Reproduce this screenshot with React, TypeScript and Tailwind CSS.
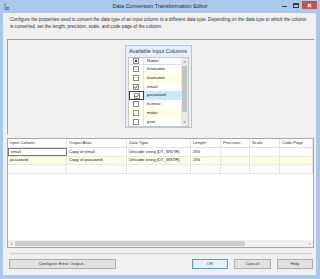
import React from "react";

const listRows = [
  { name: "firstname", checked: false },
  { name: "lastname", checked: false },
  { name: "email", checked: true },
  { name: "password", checked: true, selected: true },
  { name: "license", checked: false },
  { name: "make", checked: false },
  { name: "year", checked: false },
];

const gridCols = [
  { label: "Input Column", w: "w-[59px]" },
  { label: "Output Alias", w: "w-[60px]" },
  { label: "Data Type", w: "w-[64px]" },
  { label: "Length", w: "w-[30px]" },
  { label: "Precision", w: "w-[29px]" },
  { label: "Scale", w: "w-[30px]" },
  { label: "Code Page", w: "w-[33px]" },
];

const gridRows = [
  ["email", "Copy of email", "Unicode string [DT_WSTR]", "255", "", "", ""],
  ["password", "Copy of password", "Unicode string [DT_WSTR]", "255", "", "", ""],
  ["", "", "", "", "", "", ""],
];

function CheckBox({ checked, mixed }: { checked?: boolean; mixed?: boolean }) {
  return (
    <span className="flex h-[6px] w-[6px] items-center justify-center border border-[#8a8a8a] bg-white">
      {mixed && <span className="h-[2px] w-[2px] bg-[#2a2a2a]" />}
      {checked && (
        <svg width="4" height="4" viewBox="0 0 4 4">
          <path d="M0.4 2.1 L1.5 3.3 L3.7 0.6" stroke="#1a1a1a" strokeWidth="0.8" fill="none" />
        </svg>
      )}
    </span>
  );
}

function TitleBar() {
  return (
    <div className="grid h-[13px] grid-cols-[1fr_auto_1fr] items-center">
      <div className="pl-[4px]">
        <svg width="6" height="7" viewBox="0 0 6 7">
          <path d="M1 0.5 V6.5 H5.5" stroke="#5a6b7c" strokeWidth="0.8" fill="none" />
          <rect x="2" y="4" width="3" height="1.6" fill="#3b82c9" />
        </svg>
      </div>
      <div className="text-[5.5px] leading-none text-[#2b2b2b]">Data Conversion Transformation Editor</div>
      <div className="flex h-full items-start justify-end pr-[3px]">
        <div className="mt-[6px] h-[1px] w-[5px] bg-[#3a3a3a]" />
        <div className="ml-[6px] mt-[3px] h-[5px] w-[6px] border border-[#3a3a3a] border-t-2" />
        <div className="ml-[3px] mt-[1px] flex h-[8px] w-[15px] items-center justify-center bg-[#c75050]">
          <svg width="5" height="5" viewBox="0 0 5 5">
            <path d="M0.8 0.8 L4.2 4.2 M4.2 0.8 L0.8 4.2" stroke="#ffffff" strokeWidth="1.1" />
          </svg>
        </div>
      </div>
    </div>
  );
}

function AvailableColumns() {
  return (
    <div className="ml-[117px] mt-[5px] flex h-[83px] w-[67px] flex-col border border-[#b7c6d8] bg-[#e6eef8]">
      <div className="h-[11px] whitespace-nowrap pl-[3px] pt-[3px] text-[5.4px] leading-none text-[#1e3a5f]">
        Available Input Columns
      </div>
      <div className="mx-[2px] flex h-[70px] overflow-hidden border border-[#c8c8c8] bg-white">
        <div className="flex w-[54px] flex-col">
          <div className="flex h-[8.5px] items-center border-b border-[#dcdcdc]">
            <div className="flex h-full w-[15px] items-center justify-center border-r border-[#e2e2e2]">
              <CheckBox mixed />
            </div>
            <span className="pl-[3px] text-[4.4px] leading-none text-[#222]">Name</span>
          </div>
          {listRows.map((row, i) => (
            <div
              key={row.name}
              className={
                "flex h-[8.75px] shrink-0 items-center " +
                (i % 2 === 1 && !row.selected ? "bg-[#ffffe1]" : "bg-white")
              }
            >
              <div
                className={
                  "flex h-full w-[15px] items-center justify-center " +
                  (row.selected ? "border border-[#3c3c3c]" : "border-r border-[#e2e2e2]")
                }
              >
                <CheckBox checked={row.checked} />
              </div>
              <span
                className={
                  "flex h-full flex-1 items-center pl-[3px] text-[4.4px] leading-none text-[#222] " +
                  (row.selected ? "bg-[#cce8ff]" : "")
                }
              >
                {row.name}
              </span>
            </div>
          ))}
        </div>
        <div className="flex w-[7px] flex-col bg-[#e8e8e8]">
          <div className="flex h-[8px] items-center justify-center text-[4px] leading-none text-[#606060]">˄</div>
          <div className="mx-[1px] h-[46px] bg-[#c2c2c2]" />
          <div className="flex-1" />
          <div className="flex h-[8px] items-center justify-center text-[4px] leading-none text-[#606060]">˅</div>
        </div>
      </div>
    </div>
  );
}

function ColumnGrid() {
  return (
    <div className="ml-[4px] mr-[2px] mt-[4px] flex h-[110px] flex-col border border-[#a8a8a8] bg-white">
      <div className="flex h-[9px] shrink-0 border-b border-[#e0e0e0]">
        {gridCols.map((c) => (
          <div
            key={c.label}
            className={c.w + " flex items-center whitespace-nowrap border-r border-[#e4e4e4] pl-[2px] text-[4.2px] leading-none text-[#333]"}
          >
            {c.label}
          </div>
        ))}
      </div>
      {gridRows.map((row, r) => (
        <div
          key={r}
          className={
            "flex h-[8.7px] shrink-0 border-b border-[#e4e4e4] " + (r === 1 ? "bg-[#ffffe1]" : "bg-white")
          }
        >
          {row.map((cell, c) => (
            <div
              key={c}
              className={
                gridCols[c].w +
                " flex items-center overflow-hidden whitespace-nowrap pl-[2px] text-[4.2px] leading-none text-[#222] " +
                (r === 0 && c === 0 ? "border border-[#7a7a7a] bg-white" : "border-r border-[#e4e4e4]")
              }
            >
              {cell}
            </div>
          ))}
        </div>
      ))}
      <div className="flex-1" />
      <div className="flex h-[7px] shrink-0 items-center bg-[#f0f0f0]">
        <div className="flex h-full w-[7px] items-center justify-center text-[5px] leading-none text-[#555]">‹</div>
        <div className="h-[5px] w-[230px] bg-[#cdcdcd]" />
        <div className="flex-1" />
        <div className="flex h-full w-[7px] items-center justify-center text-[5px] leading-none text-[#555]">›</div>
      </div>
    </div>
  );
}

function Button({ label, w, primary }: { label: string; w: string; primary?: boolean }) {
  return (
    <div
      className={
        w +
        " flex h-[10px] items-center justify-center border text-[4.4px] leading-none text-[#333] " +
        (primary ? "border-[#5b9bd5] bg-[#e5f1fb]" : "border-[#adadad] bg-[#e1e1e1]")
      }
    >
      {label}
    </div>
  );
}

export default function App() {
  return (
    <div className="flex h-[279px] w-[320px] flex-col overflow-hidden bg-[#aac8ec] font-['Liberation_Sans',Arial,sans-serif]">
      <TitleBar />
      <div className="mb-[4px] ml-[3px] mr-[4px] flex flex-1 flex-col bg-[#f0f0f0]">
        <div className="h-[26px] whitespace-nowrap pl-[7px] pt-[4px] text-[4.6px] leading-[6.6px] text-[#333]">
          Configure the properties used to convert the data type of an input column to a different data type. Depending on the data type to which the column
          <br />
          is converted, set the length, precision, scale, and code page of the column.
        </div>
        <div className="ml-[4px] mr-[2px] h-[95px] border-l border-t border-[#a0a0a0]">
          <AvailableColumns />
        </div>
        <ColumnGrid />
        <div className="ml-[7px] mr-[4px] mt-[5px] h-[1px] bg-[#d0d0d0]" />
        <div className="ml-[6px] mr-[3px] mt-[5px] flex gap-[6px]">
          <Button label="Configure Error Output..." w="w-[107px]" />
          <div className="flex-1" />
          <Button label="OK" w="w-[36px]" primary />
          <Button label="Cancel" w="w-[37px]" />
          <Button label="Help" w="w-[36px]" />
        </div>
      </div>
    </div>
  );
}
